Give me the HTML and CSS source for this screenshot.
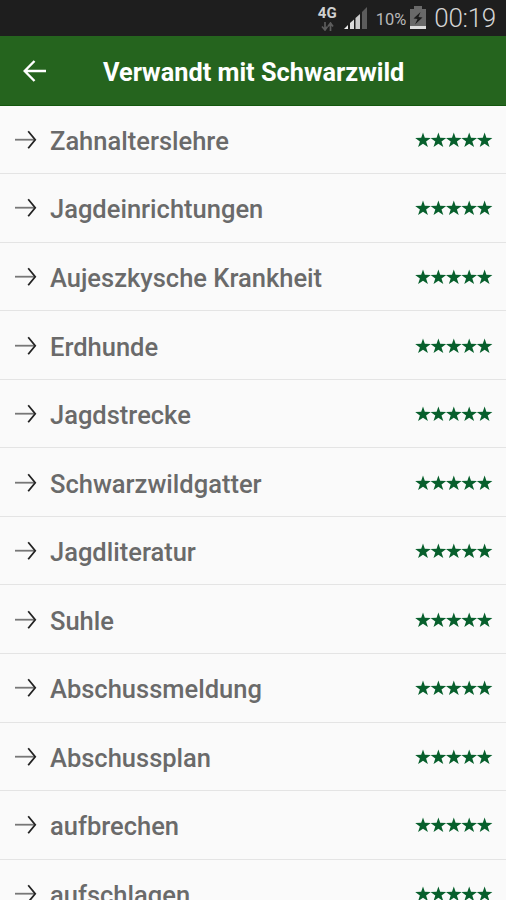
FILE: index.html
```html
<!DOCTYPE html>
<html lang="de">
<head>
<meta charset="utf-8">
<title>Verwandt mit Schwarzwild</title>
<link rel="stylesheet" href="styles.css">
</head>
<body>
<svg class="defs" width="0" height="0" aria-hidden="true">
  <symbol id="arrow" viewBox="0 0 24 20">
    <path d="M1 9.7H20" fill="none" stroke="#777" stroke-width="1.8"/>
    <path d="M14.2 1.2L21.2 9.7L14.2 18.2" fill="none" stroke="#222" stroke-width="1.8"/>
  </symbol>
  <symbol id="stars" viewBox="0 0 78 16">
    <g fill="#075f2c">
      <path id="star" d="M8 .5L9.8 5.7L15.8 6L11.1 9.4L12.9 15.1L8 11.8L3.1 15.1L4.9 9.4L.2 6L6.2 5.7Z"/>
      <use href="#star" x="15.4"/>
      <use href="#star" x="30.8"/>
      <use href="#star" x="46.2"/>
      <use href="#star" x="61.6"/>
    </g>
  </symbol>
</svg>
<div class="status">
  <div class="network">
    <span class="gen">4G</span>
    <svg width="13" height="9" viewBox="0 0 13 9"><path d="M4 0V7M1 4.5L4 8L6.5 4.5M9.5 9V2M7 4.5L9.5 1L12 4.5" fill="none" stroke="#5c5c5c" stroke-width="1.7"/></svg>
  </div>
  <svg class="signal" width="24" height="23" viewBox="0 0 24 23">
    <path d="M0 22L4 18V22Z" fill="#eee"/>
    <path d="M6 16L10 12.5V22H6Z" fill="#ddd"/>
    <path d="M11.5 11L16 7V22H11.5Z" fill="#ccc"/>
    <path d="M18 5L23 0V22H18Z" fill="#5c5c5c"/>
  </svg>
  <span class="percent">10%</span>
  <svg class="battery" width="16" height="24" viewBox="0 0 16 24">
    <path d="M0 3H4V0H12V3H16V20H0Z" fill="#696969"/>
    <path d="M10.5 6L3.5 12.5L7.5 13L5 18.5L12.5 11.5L8.5 11Z" fill="#1c1c1c"/>
    <path d="M0 20H16V23H0Z" fill="#ddd"/>
  </svg>
  <span class="clock">00:19</span>
</div>
<header class="bar">
  <svg class="back" width="24" height="22" viewBox="0 0 24 22"><path d="M23 11H2M11.5 1L1.7 11L11.5 21" fill="none" stroke="#fff" stroke-width="2.4"/></svg>
  <h1>Verwandt mit Schwarzwild</h1>
</header>
<ul class="list">
  <li><svg class="arrow"><use href="#arrow"/></svg><span>Zahnalterslehre</span><svg class="stars"><use href="#stars"/></svg></li>
  <li><svg class="arrow"><use href="#arrow"/></svg><span>Jagdeinrichtungen</span><svg class="stars"><use href="#stars"/></svg></li>
  <li><svg class="arrow"><use href="#arrow"/></svg><span>Aujeszkysche Krankheit</span><svg class="stars"><use href="#stars"/></svg></li>
  <li><svg class="arrow"><use href="#arrow"/></svg><span>Erdhunde</span><svg class="stars"><use href="#stars"/></svg></li>
  <li><svg class="arrow"><use href="#arrow"/></svg><span>Jagdstrecke</span><svg class="stars"><use href="#stars"/></svg></li>
  <li><svg class="arrow"><use href="#arrow"/></svg><span>Schwarzwildgatter</span><svg class="stars"><use href="#stars"/></svg></li>
  <li><svg class="arrow"><use href="#arrow"/></svg><span>Jagdliteratur</span><svg class="stars"><use href="#stars"/></svg></li>
  <li><svg class="arrow"><use href="#arrow"/></svg><span>Suhle</span><svg class="stars"><use href="#stars"/></svg></li>
  <li><svg class="arrow"><use href="#arrow"/></svg><span>Abschussmeldung</span><svg class="stars"><use href="#stars"/></svg></li>
  <li><svg class="arrow"><use href="#arrow"/></svg><span>Abschussplan</span><svg class="stars"><use href="#stars"/></svg></li>
  <li><svg class="arrow"><use href="#arrow"/></svg><span>aufbrechen</span><svg class="stars"><use href="#stars"/></svg></li>
  <li><svg class="arrow"><use href="#arrow"/></svg><span>aufschlagen</span><svg class="stars"><use href="#stars"/></svg></li>
</ul>
</body>
</html>
```
FILE: styles.css
```css
* { box-sizing: border-box; }
body {
  margin: 0;
  height: 900px;
  overflow: hidden;
  display: flex;
  flex-direction: column;
  background: #fafafa;
  font-family: Roboto, sans-serif;
}
.defs { position: absolute; }
.status {
  flex: none;
  height: 36px;
  display: flex;
  align-items: center;
  justify-content: flex-end;
  padding-right: 10px;
  background: #1e1e1e;
  color: #b8b8b8;
}
.network {
  display: flex;
  flex-direction: column;
  align-items: center;
  gap: 2px;
  margin: 0 7px 0 0;
}
.gen { font-size: 15px; line-height: 14px; font-weight: 700; color: #d0d0d0; }
.signal { margin-right: 8px; }
.percent { font-size: 16.5px; margin: 2px 4px 0 0; }
.battery { margin-right: 8px; }
.clock { font-size: 26px; line-height: 36px; font-weight: 300; letter-spacing: -0.3px; color: #d4d4d4; }
.bar {
  flex: none;
  height: 69.6px;
  display: flex;
  align-items: center;
  padding-left: 23px;
  background: #25641e;
  border-bottom: 1px solid #14570e;
  color: #fff;
}
.back { margin-top: 1px; }
.bar h1 {
  margin: 5px 0 0 56px;
  font-size: 25.3px;
  line-height: 30px;
  font-weight: 700;
  white-space: nowrap;
}
.list { flex: none; margin: 0; padding: 0; list-style: none; }
.list li {
  height: 68.55px;
  display: flex;
  align-items: center;
  padding: 0 13px 0 14px;
  border-bottom: 1px solid #e4e4e4;
  color: #6a6a6a;
  font-size: 25.5px;
  line-height: 30px;
  font-weight: 500;
}
.list span { flex: 1; margin: 3px 0 0 12px; white-space: nowrap; }
.arrow { width: 24px; height: 20px; margin-top: 1px; }
.stars { width: 78px; height: 16px; margin-top: 1px; }
```
